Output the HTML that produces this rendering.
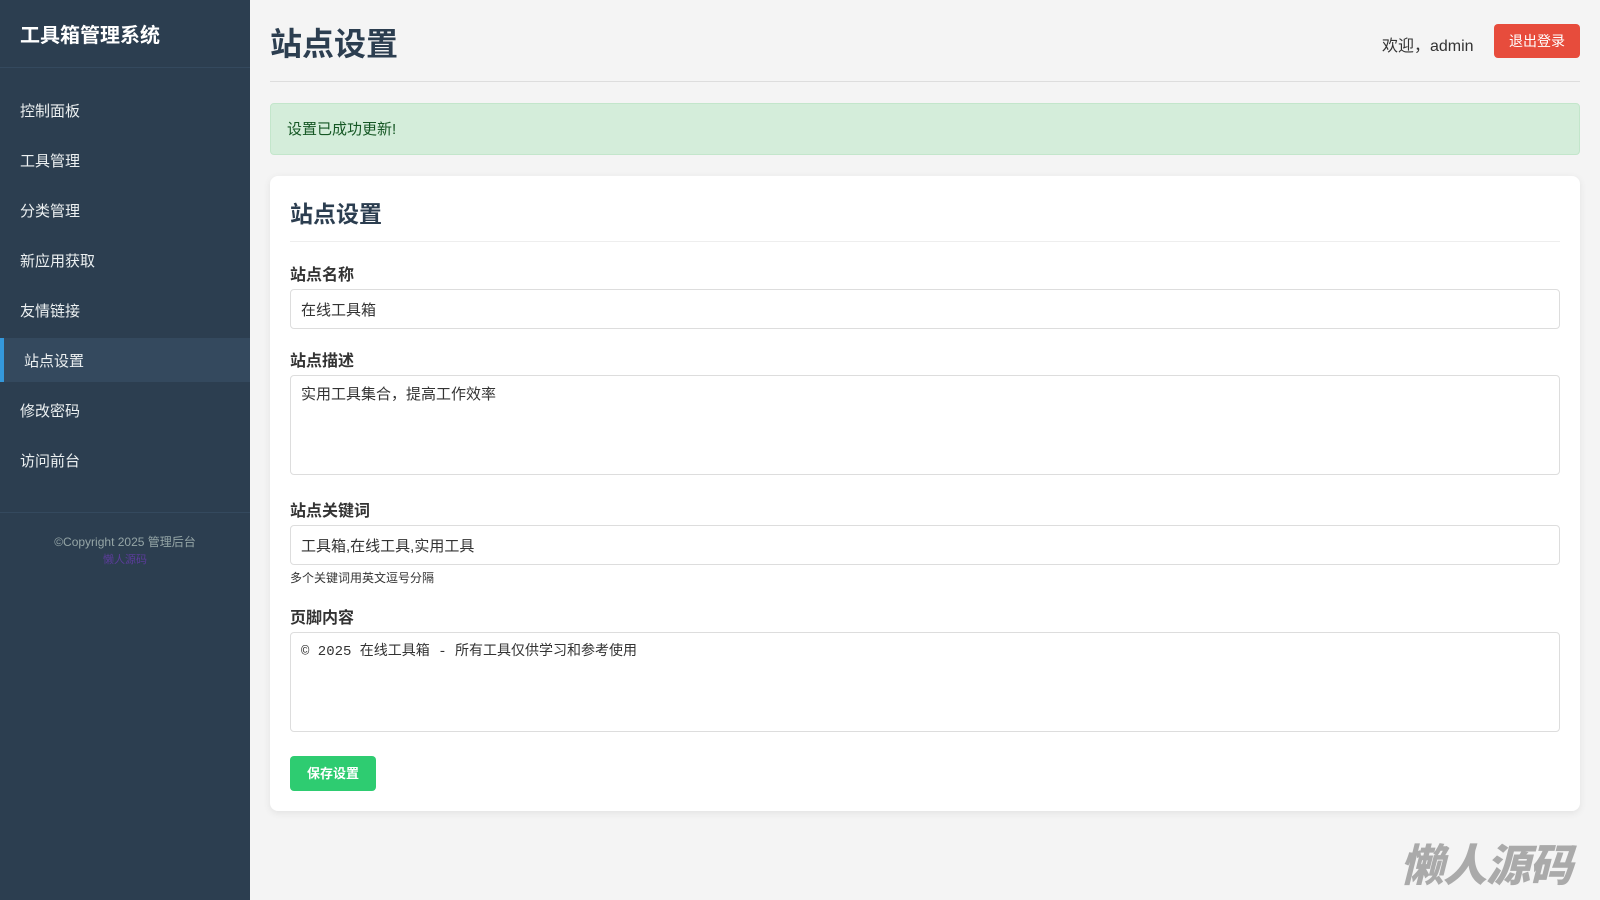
<!DOCTYPE html>
<html><head><meta charset="utf-8"><style>
*{box-sizing:border-box;margin:0;padding:0}
body{width:1600px;height:900px;background:#f4f4f4;font-family:"Liberation Sans","Noto Sans CJK SC",sans-serif;color:#333;position:relative;overflow:hidden}
.sb{position:absolute;left:0;top:0;width:250px;height:900px;background:#2c3e50;color:#fff}
.sb .t{position:absolute;left:20px;top:19px;font-size:20px;font-weight:bold}
.sb .hl{position:absolute;left:0;top:67px;width:250px;height:1px;background:#34495e}
.sb .n{position:absolute;left:20px;font-size:15px;color:#ecf0f1}
.sb .act{position:absolute;left:0;top:338px;width:250px;height:44px;background:#34495e;border-left:4px solid #3498db}
.sb .fl{position:absolute;left:0;top:512px;width:250px;height:1px;background:#34495e}
.sb .cp{position:absolute;left:0;width:250px;text-align:center;top:533px;font-size:12px;color:#95a5a6}
.sb .cp2{position:absolute;left:100px;top:555px;width:50px;height:10px;color:#5b3c9a;font-size:11px;text-align:center;line-height:10px}
.h1{position:absolute;left:270px;top:19px;font-size:32px;font-weight:bold;color:#2c3e50}
.hr{position:absolute;left:270px;top:81px;width:1310px;height:1px;background:#ddd}
.wel{position:absolute;left:1382px;top:32px;font-size:16px;color:#333}
.lo{position:absolute;left:1494px;top:24px;width:86px;height:34px;background:#e74c3c;color:#fff;border-radius:4px;font-size:14px;text-align:center;line-height:34px}
.al{position:absolute;left:270px;top:103px;width:1310px;height:52px;background:#d4edda;border:1px solid #c3e6cb;border-radius:4px;color:#155724;font-size:15px;padding:0 16px;line-height:52px}
.card{position:absolute;left:270px;top:176px;width:1310px;height:635px;background:#fff;border-radius:8px;box-shadow:0 2px 8px rgba(0,0,0,.08)}
.card .ct{position:absolute;left:20px;top:19px;font-size:23px;font-weight:bold;color:#2c3e50}
.card .cl{position:absolute;left:20px;top:65px;width:1270px;height:1px;background:#eee}
.lb{position:absolute;left:20px;font-size:16px;font-weight:bold;color:#333}
.in{position:absolute;left:20px;width:1270px;border:1px solid #ddd;border-radius:4px;font-size:15px;padding:0 10px;color:#333}
.hint{position:absolute;left:20px;font-size:12px;color:#333}
.btn{position:absolute;left:20px;top:580px;width:86px;height:35px;background:#2ecc71;color:#fff;border-radius:4px;font-size:13px;font-weight:bold;text-align:center;line-height:35px}
.wm{position:absolute;left:1400px;top:830px;font-size:44px;font-weight:900;font-style:italic;color:#aaa;letter-spacing:-1px}
</style></head><body>
<div class="sb">
<div class="t">工具箱管理系统</div><div class="hl"></div>
<div class="act"></div>
<div class="n" style="top:100px">控制面板</div>
<div class="n" style="top:150px">工具管理</div>
<div class="n" style="top:200px">分类管理</div>
<div class="n" style="top:250px">新应用获取</div>
<div class="n" style="top:300px">友情链接</div>
<div class="n" style="top:350px;left:24px">站点设置</div>
<div class="n" style="top:400px">修改密码</div>
<div class="n" style="top:450px">访问前台</div>
<div class="fl"></div>
<div class="cp">©Copyright 2025 管理后台</div>
<div class="cp2">懒人源码</div>
</div>
<div class="h1">站点设置</div>
<div class="hr"></div>
<div class="wel">欢迎，admin</div>
<div class="lo">退出登录</div>
<div class="al">设置已成功更新!</div>
<div class="card">
<div class="ct">站点设置</div><div class="cl"></div>
<div class="lb" style="top:85px">站点名称</div>
<div class="in" style="top:113px;height:40px;line-height:41px">在线工具箱</div>
<div class="lb" style="top:171px">站点描述</div>
<div class="in" style="top:199px;height:100px;padding-top:9px;line-height:20px">实用工具集合，提高工作效率</div>
<div class="lb" style="top:321px">站点关键词</div>
<div class="in" style="top:349px;height:40px;line-height:41px">工具箱,在线工具,实用工具</div>
<div class="hint" style="top:393px">多个关键词用英文逗号分隔</div>
<div class="lb" style="top:428px">页脚内容</div>
<div class="in" style="top:456px;height:100px;padding-top:9px;line-height:20px;font-family:'Liberation Mono','Noto Sans CJK SC',monospace;font-size:14px">© 2025 在线工具箱 - 所有工具仅供学习和参考使用</div>
<div class="btn">保存设置</div>
</div>
<div class="wm">懒人源码</div>
</body></html>
